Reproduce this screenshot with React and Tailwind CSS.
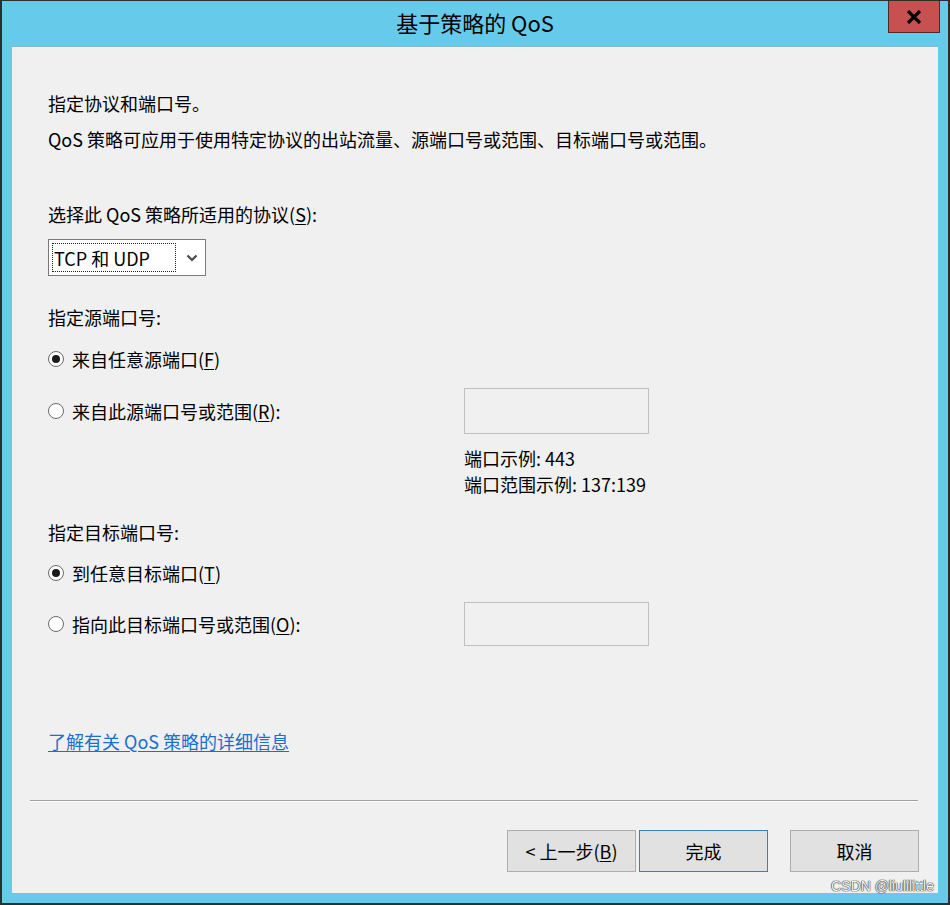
import React from 'react';

const font = { fontFamily: '"Noto Sans CJK SC", "Microsoft YaHei", sans-serif' };

const Radio = ({ checked }) => (
  <span className="flex items-center justify-center w-[16px] h-[16px] rounded-full border border-[#6b6b6b] bg-white shrink-0">
    {checked && <span className="w-[8px] h-[8px] rounded-full bg-[#1a1a1a]" />}
  </span>
);

const PortBox = ({ h }) => (
  <div className={`w-[185px] ${h} border border-[#bcc0c2] bg-[#f0f0f0]`} />
);

export default function App() {
  return (
    <div
      className="relative w-[950px] h-[905px] flex flex-col bg-[#66cbea] border-t border-x-2 border-b-2 border-[#2e2e2e] text-[18px] text-black overflow-hidden"
      style={font}
    >
      {/* Title bar */}
      <div className="h-[45px] shrink-0 flex items-center justify-center pb-[3px]">
        <span className="text-[22px] leading-none">基于策略的 QoS</span>
      </div>
      <button className="absolute top-[-1px] right-[8px] w-[52px] h-[33px] bg-[#c75050] border border-[#4a2a2a] flex items-center justify-center">
        <svg width="16" height="14" viewBox="0 0 16 14">
          <path d="M2 1 L14 13 M14 1 L2 13" stroke="#000" strokeWidth="3.2" />
        </svg>
      </button>

      {/* Client area */}
      <div className="flex-1 mx-[10px] mb-[10px] bg-[#f0f0f0] border-t border-[#8fb4c4] flex flex-col pl-[36px] pt-[44px]">
        <p className="h-6 leading-6">指定协议和端口号。</p>
        <p className="h-6 leading-6 mt-[12px]">QoS 策略可应用于使用特定协议的出站流量、源端口号或范围、目标端口号或范围。</p>

        <p className="h-6 leading-6 mt-[51px]">
          选择此 QoS 策略所适用的协议(<span className="underline underline-offset-2">S</span>):
        </p>
        <div className="mt-[13px] w-[158px] h-[37px] border border-[#7a7a7a] bg-white flex items-center pl-[3px] pr-[7px]">
          <div className="w-[124px] h-[29px] border border-dotted border-[#222] flex items-center pl-[1px] leading-none">
            TCP 和 UDP
          </div>
          <svg className="ml-auto" width="12" height="8" viewBox="0 0 12 8">
            <path d="M1.5 1.5 L6 6 L10.5 1.5" stroke="#4a4a4a" strokeWidth="2.2" fill="none" />
          </svg>
        </div>

        <p className="h-6 leading-6 mt-[29px]">指定源端口号:</p>
        <label className="h-6 mt-[18px] flex items-center gap-[8px]">
          <Radio checked />
          <span>来自任意源端口(<span className="underline underline-offset-2">F</span>)</span>
        </label>
        <div className="mt-[17px] grid grid-cols-[416px_auto] items-center">
          <label className="flex items-center gap-[8px]">
            <Radio />
            <span>来自此源端口号或范围(<span className="underline underline-offset-2">R</span>):</span>
          </label>
          <PortBox h="h-[46px]" />
        </div>
        <div className="ml-[416px] mt-[11px] leading-[26px]">
          <p>端口示例: 443</p>
          <p>端口范围示例: 137:139</p>
        </div>

        <p className="h-6 leading-6 mt-[23px]">指定目标端口号:</p>
        <label className="h-6 mt-[17px] flex items-center gap-[8px]">
          <Radio checked />
          <span>到任意目标端口(<span className="underline underline-offset-2">T</span>)</span>
        </label>
        <div className="mt-[17px] grid grid-cols-[416px_auto] items-center">
          <label className="flex items-center gap-[8px]">
            <Radio />
            <span>指向此目标端口号或范围(<span className="underline underline-offset-2">O</span>):</span>
          </label>
          <PortBox h="h-[44px]" />
        </div>

        <a href="#" className="h-6 leading-6 mt-[83px] self-start text-[#1b6fd0] underline underline-offset-2">
          了解有关 QoS 策略的详细信息
        </a>

        <div className="mt-[47px] ml-[-18px] mr-[20px] border-t border-[#a0a0a0] border-b border-b-white" />

        <div className="mt-[28px] mr-[19px] flex justify-end">
          <button className="w-[129px] h-[42px] bg-[#e1e1e1] border border-[#adadad]">
            &lt; 上一步(<span className="underline underline-offset-2">B</span>)
          </button>
          <button className="ml-[3px] w-[129px] h-[42px] bg-[#e1e1e1] border border-[#3c7fb1]">完成</button>
          <button className="ml-[22px] w-[129px] h-[42px] bg-[#e1e1e1] border border-[#adadad]">取消</button>
        </div>
      </div>

      <span
        className="absolute right-[14px] bottom-[6px] text-[14px] text-[#f7f7f7] [text-shadow:0_0_1px_#333,0_0_1px_#333,0_0_1px_#333]"
        style={{ fontFamily: '"Liberation Sans", Arial, sans-serif' }}
      >
        CSDN @liulilittle
      </span>
    </div>
  );
}
